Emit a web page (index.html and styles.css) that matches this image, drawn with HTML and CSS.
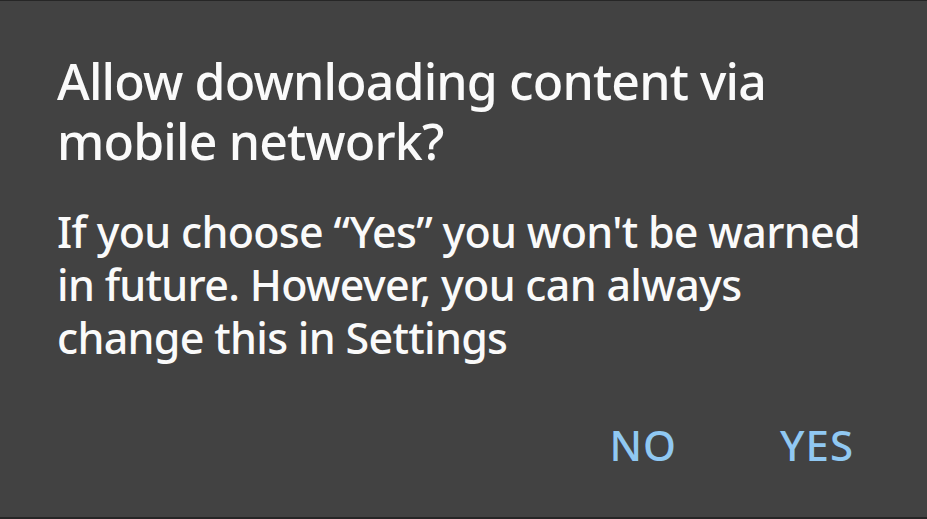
FILE: index.html
```html
<!DOCTYPE html>
<html lang="en">
<head>
  <meta charset="UTF-8">
  <title>Mobile data</title>
  <link rel="stylesheet" href="styles.css">
</head>
<body>
  <div class="dialog">
    <h2 class="title">Allow downloading content via mobile network?</h2>
    <p class="message">If you choose “Yes” you won't be warned in future. However, you can always change this in Settings</p>
    <div class="actions">
      <button class="action">NO</button>
      <button class="action">YES</button>
    </div>
  </div>
</body>
</html>
```
FILE: styles.css
```css
html, body {
  margin: 0;
  height: 100%;
}

body {
  background-color: #424242;
  font-family: "Noto Sans", sans-serif;
}

.dialog {
  box-sizing: border-box;
  height: 100%;
  border-top: 1px solid #262626;
  border-bottom: 2px solid #262626;
  padding: 50px 40px 0 57px;
  display: flex;
  flex-direction: column;
}

.title {
  margin: 0;
  color: #fafafa;
  font-size: 50px;
  font-weight: 500;
  letter-spacing: -0.85px;
  line-height: 60px;
  width: 760px;
}

.message {
  margin: 34px 0 0;
  color: #fafafa;
  font-size: 43px;
  font-weight: 500;
  letter-spacing: -0.7px;
  line-height: 53px;
  width: 830px;
}

.actions {
  display: flex;
  justify-content: flex-end;
  gap: 103px;
  margin-top: 56px;
  padding-right: 33px;
}

.action {
  border: none;
  background: none;
  padding: 0;
  margin: 0;
  color: #90c8f2;
  font-family: "Noto Sans", sans-serif;
  font-size: 42px;
  font-weight: 500;
  letter-spacing: 1px;
  line-height: 50px;
  cursor: pointer;
}
```
